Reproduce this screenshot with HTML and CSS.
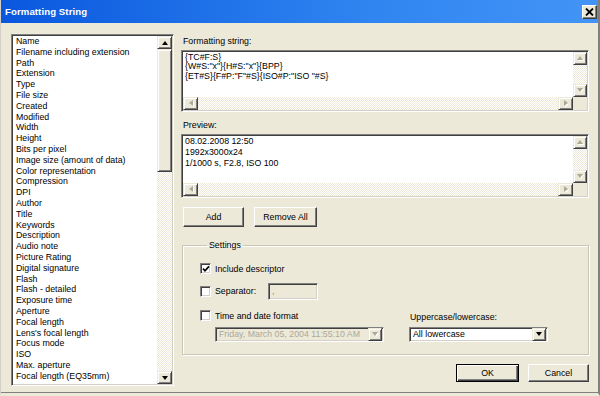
FILE: index.html
```html
<!DOCTYPE html>
<html lang="en">
<head>
<meta charset="UTF-8">
<meta name="viewport" content="width=device-width, initial-scale=1.0">
<title>Formatting String</title>
<link rel="stylesheet" href="styles.css">
</head>
<body>
<div class="window">
    <div class="titlebar">
        <span class="title">Formatting String</span>
        <span class="close-btn">
            <svg width="9" height="8" viewBox="0 0 9 8"><path d="M1 0.5 L8 7.5 M8 0.5 L1 7.5" stroke="#000" stroke-width="1.8"/></svg>
        </span>
    </div>

    <div class="client">
        <!-- list of available fields -->
        <div class="listbox sunken">
            <ul class="field-list">
                <li>Name</li>
                <li>Filename including extension</li>
                <li>Path</li>
                <li>Extension</li>
                <li>Type</li>
                <li>File size</li>
                <li>Created</li>
                <li>Modified</li>
                <li>Width</li>
                <li>Height</li>
                <li>Bits per pixel</li>
                <li>Image size (amount of data)</li>
                <li>Color representation</li>
                <li>Compression</li>
                <li>DPI</li>
                <li>Author</li>
                <li>Title</li>
                <li>Keywords</li>
                <li>Description</li>
                <li>Audio note</li>
                <li>Picture Rating</li>
                <li>Digital signature</li>
                <li>Flash</li>
                <li>Flash - detailed</li>
                <li>Exposure time</li>
                <li>Aperture</li>
                <li>Focal length</li>
                <li>Lens's focal length</li>
                <li>Focus mode</li>
                <li>ISO</li>
                <li>Max. aperture</li>
                <li>Focal length (EQ35mm)</li>
            </ul>
            <div class="vscroll list-scroll">
                <span class="sb-btn up"></span>
                <span class="sb-thumb"></span>
                <span class="sb-track"></span>
                <span class="sb-btn down"></span>
            </div>
        </div>

        <div class="pane">
            <div class="caption first">Formatting string:</div>
            <div class="textbox format-box sunken">
                <div class="tb-text format-text">{TC#F:S}<br>{W#S:"x"}{H#S:"x"}{BPP}<br>{ET#S}{F#P:"F"#S}{ISO#P:"ISO "#S}</div>
                <div class="vscroll off">
                    <span class="sb-btn up"></span>
                    <span class="sb-track"></span>
                    <span class="sb-btn down"></span>
                </div>
                <div class="hscroll off">
                    <span class="sb-btn left"></span>
                    <span class="sb-track"></span>
                    <span class="sb-btn right"></span>
                </div>
                <div class="corner"></div>
            </div>

            <div class="caption">Preview:</div>
            <div class="textbox preview-box sunken">
                <div class="tb-text preview-text">08.02.2008 12:50<br>1992x3000x24<br>1/1000 s, F2.8, ISO 100</div>
                <div class="vscroll off">
                    <span class="sb-btn up"></span>
                    <span class="sb-track"></span>
                    <span class="sb-btn down"></span>
                </div>
                <div class="hscroll off">
                    <span class="sb-btn left"></span>
                    <span class="sb-track"></span>
                    <span class="sb-btn right"></span>
                </div>
                <div class="corner"></div>
            </div>

            <div class="btn-row">
                <button class="btn btn-add">Add</button>
                <button class="btn btn-remove">Remove All</button>
            </div>

            <fieldset class="settings">
                <legend>Settings</legend>
                <div class="check-row row-descriptor">
                    <span class="checkbox sunken">
                        <svg width="8" height="8" viewBox="0 0 8 8"><path d="M1 3.6 L3 5.8 L7 1.4" fill="none" stroke="#000" stroke-width="1.7"/></svg>
                    </span>
                    <span>Include descriptor</span>
                </div>
                <div class="check-row row-separator">
                    <span class="checkbox sunken"></span>
                    <span class="sep-label">Separator:</span>
                    <span class="sep-input sunken">,</span>
                </div>
                <div class="row-time">
                    <div class="time-col">
                        <div class="check-row">
                            <span class="checkbox sunken"></span>
                            <span>Time and date format</span>
                        </div>
                        <div class="combo combo-date disabled sunken">
                            <span class="combo-text">Friday, March 05, 2004 11:55:10 AM</span>
                            <span class="sb-btn down"></span>
                        </div>
                    </div>
                    <div class="case-col">
                        <div class="case-label">Uppercase/lowercase:</div>
                        <div class="combo combo-case sunken">
                            <span class="combo-text">All lowercase</span>
                            <span class="sb-btn down"></span>
                        </div>
                    </div>
                </div>
            </fieldset>

            <div class="dialog-buttons">
                <button class="btn btn-ok">OK</button>
                <button class="btn btn-cancel">Cancel</button>
            </div>
        </div>
    </div>
</div>
</body>
</html>
```

FILE: styles.css
```css
* {
    box-sizing: border-box;
}

body {
    margin: 0;
    font-family: "Liberation Sans", Arial, sans-serif;
    font-size: 8.8px;
    color: #000;
    background: #ECE9D8;
}

.window {
    width: 600px;
    height: 396px;
    background: #ECE9D8;
    border-left: 1px solid #D4D0C8;
    border-right: 2px solid #808080;
    border-bottom: 3px solid #ECE9D8;
    box-shadow: inset 0 -1px #808080;
    overflow: hidden;
}

/* Title bar */
.titlebar {
    height: 23px;
    display: flex;
    align-items: center;
    justify-content: space-between;
    padding: 0 1px 0 4px;
    background: linear-gradient(to right, #0A57DE, #2F84F0 60%, #4394F6);
}

.title {
    color: #fff;
    font-weight: bold;
    font-size: 9.6px;
    letter-spacing: 0.1px;
}

.close-btn {
    width: 15px;
    height: 14px;
    display: flex;
    align-items: center;
    justify-content: center;
    background: #ECE9D8;
    border: 1px solid;
    border-color: #fff #404040 #404040 #fff;
    box-shadow: inset -1px -1px #808080;
}

/* Client area */
.client {
    display: flex;
    gap: 7px;
    padding: 11px 0 0 10px;
}

.sunken {
    border: 1px solid;
    border-color: #808080 #fff #fff #808080;
    box-shadow: inset 1px 1px #404040, inset -1px -1px #D4D0C8;
}

.listbox {
    width: 163px;
    height: 352px;
    display: flex;
    background: #fff;
    padding: 1px;
}

.field-list {
    flex: 1;
    list-style: none;
    margin: 0;
    padding: 0 0 0 3px;
    line-height: 10.8px;
    overflow: hidden;
    white-space: nowrap;
}

/* Scroll bars */
.vscroll {
    display: flex;
    flex-direction: column;
    width: 14px;
}

.list-scroll {
    width: 15px;
}

.hscroll {
    display: flex;
    height: 13px;
}

.sb-btn {
    display: flex;
    align-items: center;
    justify-content: center;
    flex: none;
    height: 13px;
    background: #ECE9D8;
    border: 1px solid;
    border-color: #ECE9D8 #404040 #404040 #ECE9D8;
    box-shadow: inset 1px 1px #fff, inset -1px -1px #808080;
    color: #000;
}

.hscroll .sb-btn {
    width: 15px;
}

.sb-btn::after {
    content: "";
    width: 0;
    height: 0;
    border: 0 solid transparent;
}

.sb-btn.up::after {
    border-width: 0 3.5px 4px;
    border-bottom-color: currentColor;
}

.sb-btn.down::after {
    border-width: 4px 3.5px 0;
    border-top-color: currentColor;
}

.sb-btn.left::after {
    border-width: 3.5px 4px 3.5px 0;
    border-right-color: currentColor;
}

.sb-btn.right::after {
    border-width: 3.5px 0 3.5px 4px;
    border-left-color: currentColor;
}

.off .sb-btn,
.disabled .sb-btn {
    color: #ACA899;
}

.off .sb-btn::after,
.disabled .sb-btn::after {
    filter: drop-shadow(1px 1px 0 #fff);
}

.sb-thumb {
    height: 123px;
    flex: none;
    background: #ECE9D8;
    border: 1px solid;
    border-color: #ECE9D8 #404040 #404040 #ECE9D8;
    box-shadow: inset 1px 1px #fff, inset -1px -1px #808080;
}

.sb-track {
    flex: 1;
    background: repeating-conic-gradient(#fff 0 25%, #ECE9D8 0 50%) 0 0 / 2px 2px;
}

/* Right pane */
.pane {
    width: 408px;
    display: flex;
    flex-direction: column;
}

.caption {
    line-height: 11px;
    padding-left: 2px;
    margin-top: 8px;
    margin-bottom: 3px;
}

.caption.first {
    margin-top: 1.5px;
}

.textbox {
    display: grid;
    grid-template-columns: 1fr 14px;
    grid-template-rows: 1fr 13px;
    background: #fff;
    padding: 1px;
}

.format-box {
    height: 62px;
}

.preview-box {
    height: 64px;
}

.tb-text {
    padding-left: 2px;
    white-space: nowrap;
    overflow: hidden;
}

.format-text {
    line-height: 9.6px;
    padding-top: 1px;
}

.preview-text {
    line-height: 11px;
}

.corner {
    background: #ECE9D8;
}

.btn-row {
    display: flex;
    gap: 10px;
    margin-top: 9px;
    padding-left: 2px;
}

.btn {
    font-family: inherit;
    font-size: 8.8px;
    color: #000;
    background: #ECE9D8;
    border: 1px solid;
    border-color: #fff #404040 #404040 #fff;
    box-shadow: inset -1px -1px #808080;
    padding: 0;
}

.btn-add,
.btn-remove {
    height: 20px;
}

.btn-add {
    width: 61px;
}

.btn-remove {
    width: 63px;
}

/* Settings group */
.settings {
    margin: 13px 0 0 1px;
    padding: 0 0 0 17px;
    height: 115px;
    border: 1px solid #C9C6B6;
    box-shadow: 1px 1px #fff, inset 1px 1px #fff;
}

.settings legend {
    line-height: 11px;
    padding: 0 2px;
    margin-left: 7px;
}

.check-row {
    display: flex;
    align-items: center;
    height: 11px;
}

.row-descriptor {
    margin-top: 12.5px;
}

.checkbox {
    width: 11px;
    height: 11px;
    flex: none;
    display: flex;
    align-items: center;
    justify-content: center;
    background: #fff;
    margin-right: 4px;
}

.row-separator {
    height: 17px;
    margin-top: 8.5px;
}

.sep-label {
    width: 53px;
}

.sep-input {
    width: 50px;
    height: 17px;
    line-height: 15px;
    padding-left: 3px;
    color: #8C887A;
    background: #ECE9D8;
}

.row-time {
    display: flex;
    margin-top: 10.5px;
}

.time-col {
    width: 189px;
}

.combo {
    display: flex;
    align-items: center;
    height: 15px;
    background: #fff;
    padding: 1px;
    margin-top: 5.5px;
}

.combo .sb-btn {
    width: 14px;
    height: 13px;
}

.combo-text {
    flex: 1;
    padding-left: 2px;
    white-space: nowrap;
    overflow: hidden;
}

.combo-date {
    width: 169px;
    margin-left: 15px;
}

.combo.disabled {
    background: #ECE9D8;
    color: #ACA899;
}

.case-col {
    margin-left: 20px;
    display: flex;
    flex-direction: column;
    justify-content: flex-end;
}

.case-label {
    line-height: 11px;
    padding-left: 1px;
}

.combo-case {
    width: 139px;
    margin-top: 3.5px;
}

.dialog-buttons {
    display: flex;
    justify-content: flex-end;
    gap: 9px;
    margin-top: 9px;
}

.btn-ok,
.btn-cancel {
    height: 18px;
}

.btn-ok {
    width: 63px;
    border: 1px solid #000;
    box-shadow: inset 1px 1px #fff, inset -1px -1px #404040, inset -2px -2px #808080;
}

.btn-cancel {
    width: 61px;
}
```
